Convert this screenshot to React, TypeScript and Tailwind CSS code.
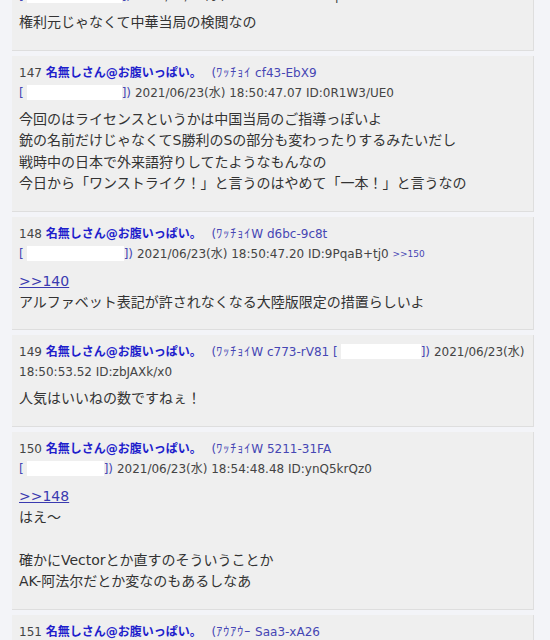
import React from "react";

const FONT = { fontFamily: '"DejaVu Sans", "Noto Sans CJK JP", "Noto Sans", sans-serif' };

function Mask({ w }: { w: number }) {
  return <span className="inline-block bg-white h-[15px] align-[-3px] ml-[3px]" style={{ width: w }} />;
}

function Name() {
  return <b className="text-[#1f1fcc] font-bold mr-[6px]">名無しさん@お腹いっぱい。</b>;
}

function Post({
  line1,
  line2,
  body,
  className = "",
}: {
  line1: React.ReactNode;
  line2: React.ReactNode;
  body: React.ReactNode;
  className?: string;
}) {
  return (
    <div className={"bg-[#efefef] border-r border-b border-[#dedede] pl-[7px] pr-[7px] pt-[7px] pb-[16px] mb-[5px] " + className}>
      <div className="text-[12px] leading-[20px] text-[#444] whitespace-nowrap">
        <div>{line1}</div>
        <div>{line2}</div>
      </div>
      <div className="mt-[6px] text-[14px] leading-[21.5px] text-[#333]">{body}</div>
    </div>
  );
}

const U = ({ children }: { children: React.ReactNode }) => <span className="text-[#4646b4]">{children}</span>;
const K = ({ children }: { children: React.ReactNode }) => <span className="tracking-[1px]">{children}</span>;
const Link = ({ children }: { children: React.ReactNode }) => (
  <div className="text-[14px] leading-[22px] text-[#3a3ab0] underline">{children}</div>
);

export default function App() {
  return (
    <div className="w-[550px] h-[640px] overflow-hidden bg-[#f3f4f8]" style={FONT}>
      <div className="pl-[12px] pr-[16px]">
        <Post
          className="mt-[-41px]"
          line1={
            <>
              146 <Name /> <U>(<K>ﾜｯﾁｮｲ</K> 4b21-Kx7a</U>
            </>
          }
          line2={
            <>
              <U>[</U>
              <Mask w={95} />
              <U>])</U> 2021/06/23(水) 18:49:51.40 ID:Kq8TzH2f0
            </>
          }
          body={<div>権利元じゃなくて中華当局の検閲なの</div>}
        />
        <Post
          line1={
            <>
              147 <Name /> <U>(<K>ﾜｯﾁｮｲ</K> cf43-EbX9</U>
            </>
          }
          line2={
            <>
              <U>[</U>
              <Mask w={95} />
              <U>])</U> 2021/06/23(水) 18:50:47.07 ID:0R1W3/UE0
            </>
          }
          body={
            <>
              <div>今回のはライセンスというかは中国当局のご指導っぽいよ</div>
              <div>銃の名前だけじゃなくてS勝利のSの部分も変わったりするみたいだし</div>
              <div>戦時中の日本で外来語狩りしてたようなもんなの</div>
              <div>今日から「ワンストライク！」と言うのはやめて「一本！」と言うなの</div>
            </>
          }
        />
        <Post
          line1={
            <>
              148 <Name /> <U>(<K>ﾜｯﾁｮｲ</K>W d6bc-9c8t</U>
            </>
          }
          line2={
            <>
              <U>[</U>
              <Mask w={97} />
              <U>])</U> 2021/06/23(水) 18:50:47.20 ID:9PqaB+tj0{" "}
              <span className="text-[9px] text-[#4646b4] align-[1px]">&gt;&gt;150</span>
            </>
          }
          body={
            <>
              <Link>&gt;&gt;140</Link>
              <div>アルファベット表記が許されなくなる大陸版限定の措置らしいよ</div>
            </>
          }
        />
        <Post
          line1={
            <>
              149 <Name /> <U>(<K>ﾜｯﾁｮｲ</K>W c773-rV81 [</U>
              <Mask w={80} />
              <U>])</U> 2021/06/23(水)
            </>
          }
          line2={<>18:50:53.52 ID:zbJAXk/x0</>}
          body={<div>人気はいいねの数ですねぇ！</div>}
        />
        <Post
          line1={
            <>
              150 <Name /> <U>(<K>ﾜｯﾁｮｲ</K>W 5211-31FA</U>
            </>
          }
          line2={
            <>
              <U>[</U>
              <Mask w={77} />
              <U>])</U> 2021/06/23(水) 18:54:48.48 ID:ynQ5krQz0
            </>
          }
          body={
            <>
              <Link>&gt;&gt;148</Link>
              <div>はえ～</div>
              <div>&nbsp;</div>
              <div>確かにVectorとか直すのそういうことか</div>
              <div>AK-阿法尔だとか変なのもあるしなあ</div>
            </>
          }
        />
        <Post
          line1={
            <>
              151 <Name /> <U>(<K>ｱｳｱｳｰ</K> Saa3-xA26</U>
            </>
          }
          line2={
            <>
              <U>[</U>
              <Mask w={90} />
              <U>])</U> 2021/06/23(水) 18:55:02.31 ID:Hn3vXa7W0
            </>
          }
          body={<div>そういうことか</div>}
        />
      </div>
    </div>
  );
}
